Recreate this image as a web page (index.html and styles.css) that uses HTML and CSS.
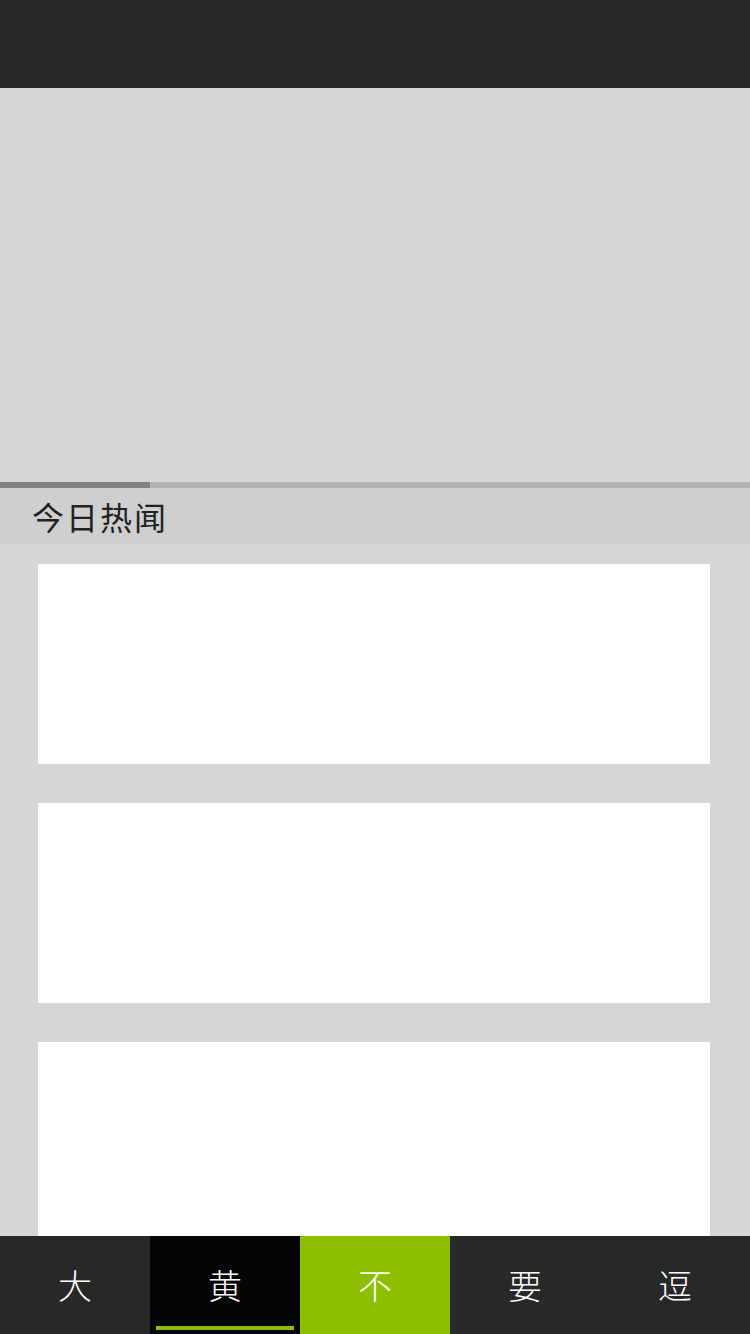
FILE: index.html
```html
<!DOCTYPE html>
<html lang="zh">
<head>
<meta charset="utf-8">
<link rel="stylesheet" href="styles.css">
</head>
<body>
<div class="app">
  <header class="topbar"></header>
  <div class="banner"></div>
  <div class="progress"><div class="progress-fill"></div></div>
  <div class="section-title">今日热闻</div>
  <main class="list">
    <div class="card"></div>
    <div class="card"></div>
    <div class="card"></div>
  </main>
  <nav class="tabbar">
    <div class="tab">大</div>
    <div class="tab tab-current">黄</div>
    <div class="tab tab-green">不</div>
    <div class="tab">要</div>
    <div class="tab">逗</div>
  </nav>
</div>
</body>
</html>
```
FILE: styles.css
```css
* { box-sizing: border-box; }
html, body { margin: 0; padding: 0; }
body {
  width: 750px;
  height: 1334px;
  overflow: hidden;
  background: #d6d6d6;
  font-family: "Noto Sans CJK SC", "Noto Sans", sans-serif;
}
.app {
  position: relative;
  width: 750px;
  height: 1334px;
  display: flex;
  flex-direction: column;
  overflow: hidden;
}
.topbar {
  height: 88px;
  flex: none;
  background: #282828;
}
.banner {
  height: 394px;
  flex: none;
  background: #d6d6d6;
}
.progress {
  height: 6px;
  flex: none;
  background: #b3b3b3;
}
.progress-fill {
  width: 150px;
  height: 100%;
  background: #808080;
}
.section-title {
  height: 56px;
  flex: none;
  background: #cfcfcf;
  color: #222222;
  font-size: 32px;
  letter-spacing: 2px;
  line-height: 56px;
  padding-left: 32px;
}
.list {
  flex: 1;
  padding: 20px 40px 0 38px;
  display: flex;
  flex-direction: column;
  gap: 39px;
  overflow: hidden;
}
.card {
  height: 200px;
  flex: none;
  background: #ffffff;
}
.tabbar {
  position: absolute;
  left: 0;
  bottom: 0;
  width: 750px;
  height: 98px;
  display: flex;
}
.tab {
  position: relative;
  flex: 1;
  background: #282828;
  color: #ffffff;
  font-size: 34px;
  font-weight: 300;
  display: flex;
  align-items: center;
  justify-content: center;
  padding-bottom: 2px;
}
.tab-current { background: #050505; }
.tab-current::after {
  content: "";
  position: absolute;
  left: 6px;
  right: 6px;
  bottom: 4px;
  height: 4px;
  background: #8cbf00;
}
.tab-green { background: #8cbf00; }
```
